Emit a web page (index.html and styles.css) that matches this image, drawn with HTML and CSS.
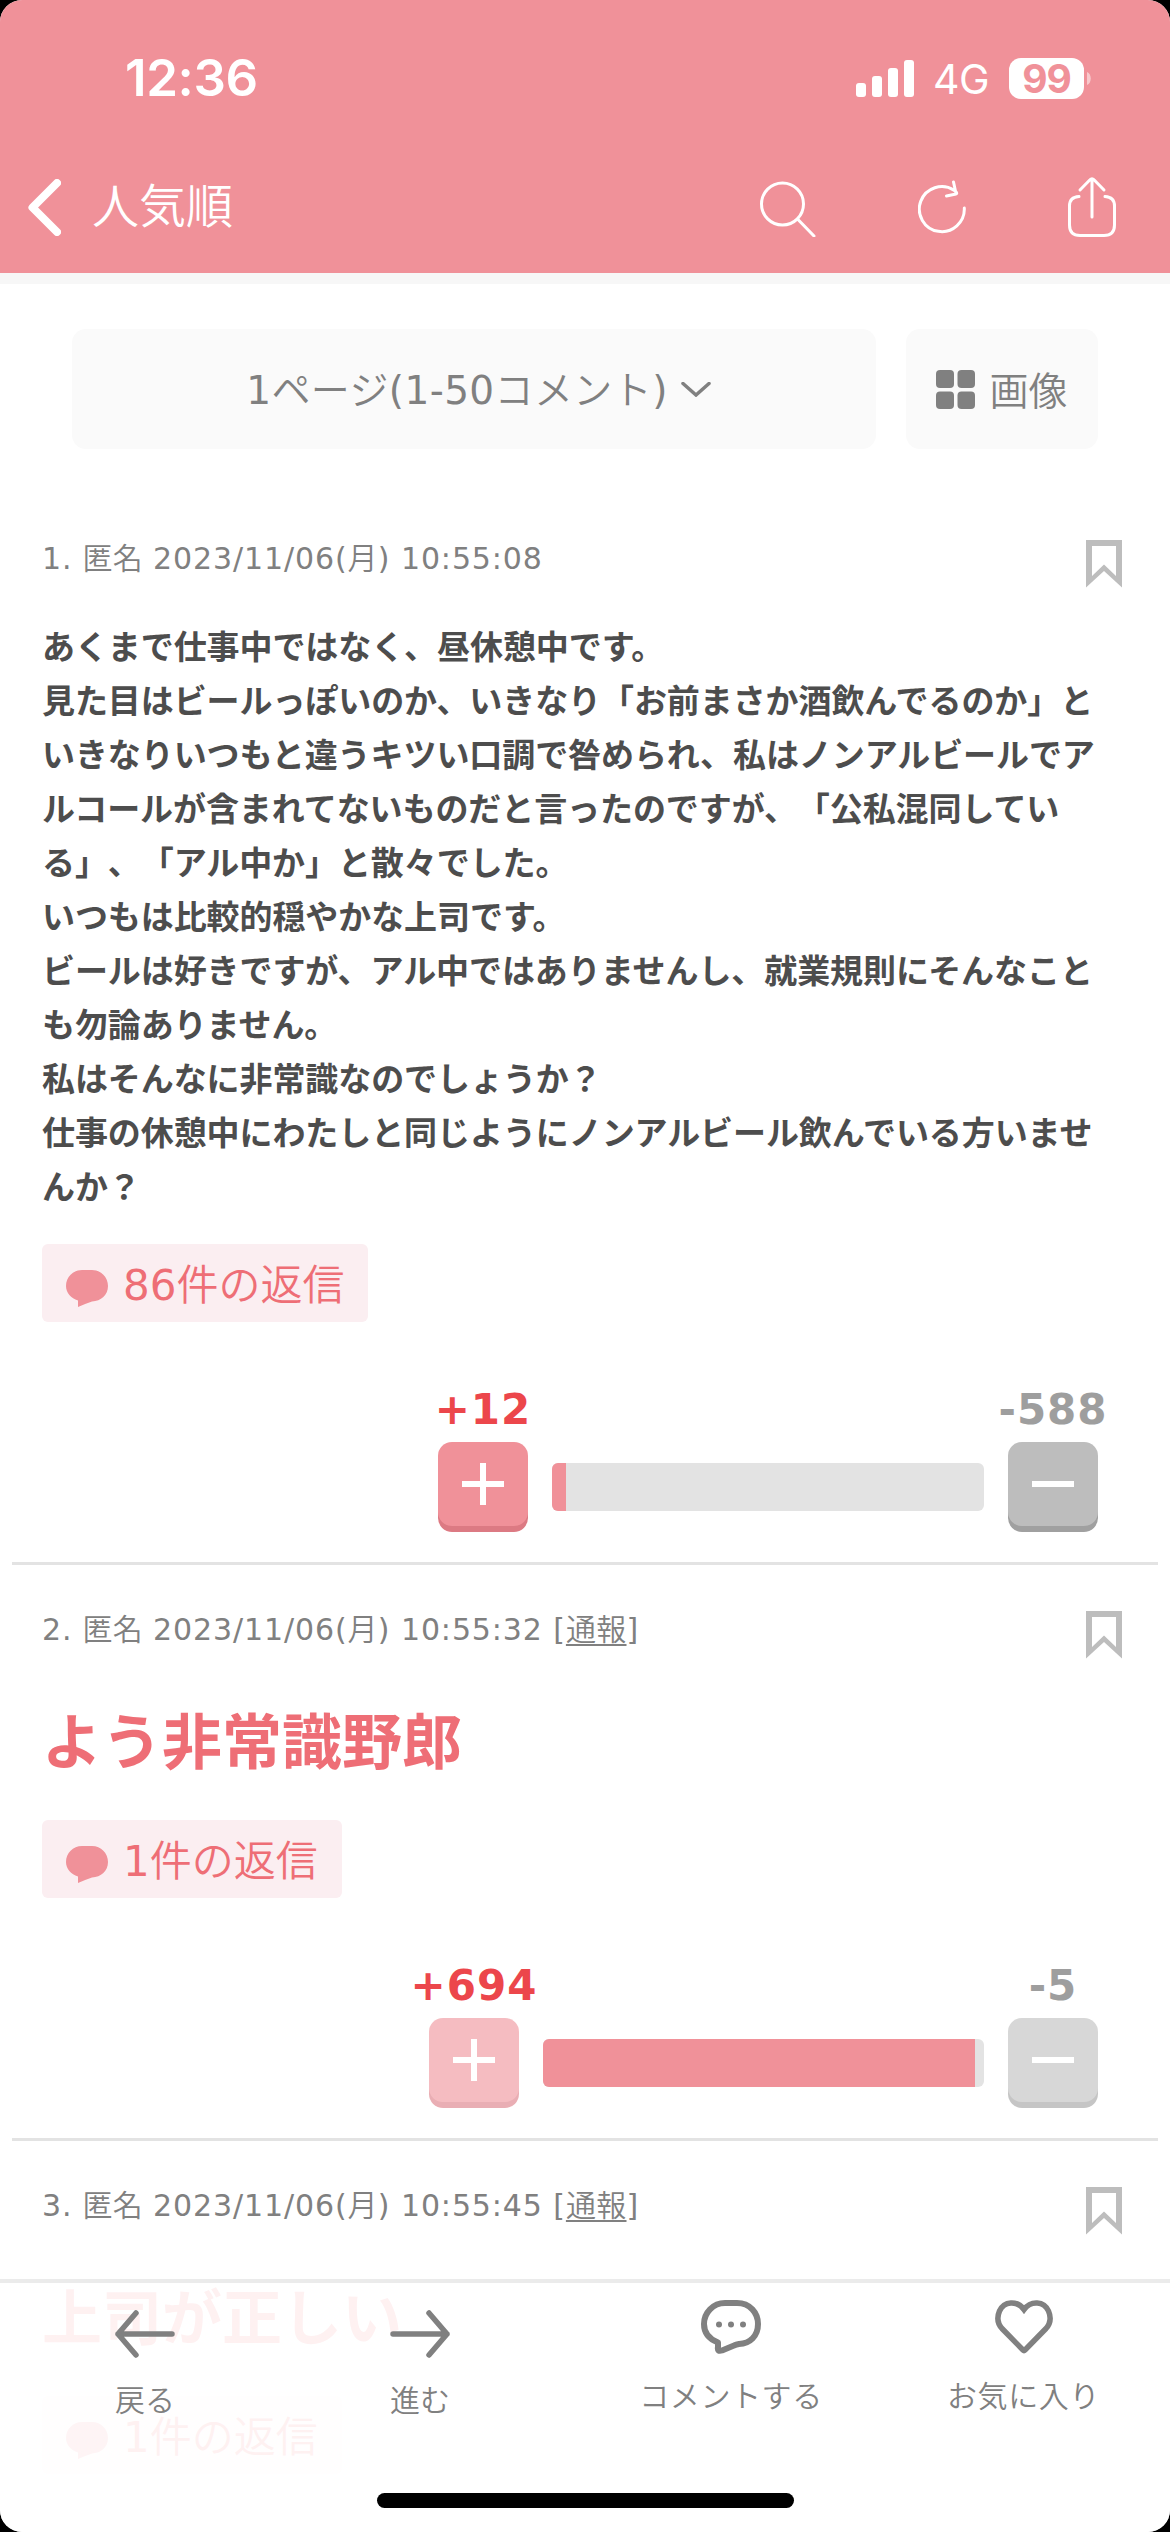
FILE: index.html
```html
<!DOCTYPE html>
<html lang="ja">
<head>
<meta charset="utf-8">
<title>人気順</title>
<link rel="stylesheet" href="styles.css">
</head>
<body>
<svg class="defs" width="0" height="0" aria-hidden="true">
  <symbol id="bookmark" viewBox="0 0 36 48"><path d="M0 0H36V47.500L18 31L0 47.500ZM6 6V36L18 24.500L30 36V6Z" fill="#bdbdbd" fill-rule="evenodd"/></symbol>
  <symbol id="bubble" viewBox="0 0 42 37"><path d="M16 0H26C35 0 42 7 42 16C42 25 35 31 26 31.500Q20 33.500 12 37V30.500C5 28 0 23 0 16C0 7 7 0 16 0Z" fill="#f09199"/></symbol>
</svg>
<div class="screen">
  <header class="header">
    <div class="status">
      <span class="clock">12:36</span>
      <div class="indicators">
        <svg width="58" height="37" viewBox="0 0 58 37" fill="#fff"><rect y="23" width="10" height="14" rx="3"/><rect x="16" y="16" width="10" height="21" rx="3"/><rect x="32" y="8" width="10" height="29" rx="3"/><rect x="48" width="10" height="37" rx="3"/></svg>
        <span class="network">4G</span>
        <span class="battery">99</span>
        <svg class="battery-tip" width="4" height="13" viewBox="0 0 4 13"><path d="M0 0C5 2 5 11 0 13Z" fill="#fff" fill-opacity=".5"/></svg>
      </div>
    </div>
    <nav class="nav">
      <svg class="back" width="33" height="57" viewBox="0 0 33 57" fill="none" stroke="#fff" stroke-width="8" stroke-linecap="round" stroke-linejoin="round"><path d="M29 4L4.500 28.500L29 53"/></svg>
      <span class="nav-title">人気順</span>
      <div class="tools">
        <svg width="56" height="60" viewBox="0 0 56 60" fill="none" stroke="#fff" stroke-width="3" stroke-linecap="round"><circle cx="22.500" cy="27" r="21"/><path d="M38 42.500L54 59"/></svg>
        <svg class="reload" width="48" height="60" viewBox="0 0 48 60" fill="none" stroke="#fff" stroke-width="3" stroke-linecap="round" stroke-linejoin="round"><path d="M46.300 31A22.500 22.500 0 1 1 36 13.200Q40 16 38 17L28.500 19M38 16.500L35.500 5"/></svg>
        <svg width="48" height="60" viewBox="0 0 48 60" fill="none" stroke="#fff" stroke-width="3" stroke-linecap="round" stroke-linejoin="round"><path d="M11 19.500Q1.500 20 1.500 29V48Q1.500 58.500 12 58.500H36Q46.500 58.500 46.500 48V29Q46.500 20 37 19.500M24 40V2M12 13L22 2.800Q24 .5 26 2.800L36 13"/></svg>
      </div>
    </nav>
  </header>
  <main>
    <div class="pager">
      <button class="control page-select"><span><b>1</b>ページ<b>(1-50</b>コメント<b>)</b></span><svg width="30" height="15" viewBox="0 0 30 15" fill="none" stroke="#808080" stroke-width="3.500" stroke-linecap="round"><path d="M2 1.500L15 13L28 1.500"/></svg></button>
      <button class="control images"><svg width="39" height="39" viewBox="0 0 39 39" fill="#808080"><rect width="18" height="18" rx="4"/><rect x="21.500" width="17.500" height="18" rx="4"/><rect y="21.500" width="18" height="17.500" rx="4"/><rect x="21.500" y="21.500" width="17.500" height="17.500" rx="4"/></svg><span>画像</span></button>
    </div>

    <article class="comment">
      <div class="meta"><span><b>1.</b> 匿名 <b>2023/11/06(</b>月<b>) 10:55:08</b></span><svg width="36" height="48"><use href="#bookmark"/></svg></div>
      <p class="body">あくまで仕事中ではなく、昼休憩中です。<br>見た目はビールっぽいのか、いきなり「お前まさか酒飲んでるのか」と<br>いきなりいつもと違うキツい口調で咎められ、私はノンアルビールでア<br>ルコールが含まれてないものだと言ったのですが、「公私混同してい<br>る」、「アル中か」と散々でした。<br>いつもは比較的穏やかな上司です。<br>ビールは好きですが、アル中ではありませんし、就業規則にそんなこと<br>も勿論ありません。<br>私はそんなに非常識なのでしょうか？<br>仕事の休憩中にわたしと同じようにノンアルビール飲んでいる方いませ<br>んか？</p>
      <a class="replies"><svg width="42" height="37"><use href="#bubble"/></svg><span><b>86</b>件の返信</span></a>
      <div class="votes">
        <div class="vote plus"><span class="count">+12</span><button class="key"></button></div>
        <div class="bar"><div class="fill" style="width:14px"></div></div>
        <div class="vote minus"><span class="count">-588</span><button class="key"></button></div>
      </div>
    </article>

    <article class="comment">
      <div class="meta"><span><b>2.</b> 匿名 <b>2023/11/06(</b>月<b>) 10:55:32 [</b><u>通報</u><b>]</b></span><svg width="36" height="48"><use href="#bookmark"/></svg></div>
      <p class="body loud">よう非常識野郎</p>
      <a class="replies"><svg width="42" height="37"><use href="#bubble"/></svg><span><b>1</b>件の返信</span></a>
      <div class="votes voted">
        <div class="vote plus"><span class="count">+694</span><button class="key"></button></div>
        <div class="bar wide"><div class="fill" style="width:432px"></div></div>
        <div class="vote minus"><span class="count">-5</span><button class="key"></button></div>
      </div>
    </article>

    <article class="comment">
      <div class="meta"><span><b>3.</b> 匿名 <b>2023/11/06(</b>月<b>) 10:55:45 [</b><u>通報</u><b>]</b></span><svg width="36" height="48"><use href="#bookmark"/></svg></div>
      <p class="body loud">上司が正しい</p>
      <a class="replies"><svg width="42" height="37"><use href="#bubble"/></svg><span><b>1</b>件の返信</span></a>
    </article>
  </main>

  <footer class="toolbar">
    <div class="tab tab-back"><svg width="60" height="48" viewBox="0 0 60 48" fill="none" stroke="#808080" stroke-width="5.500" stroke-linecap="round" stroke-linejoin="round"><path d="M57 24H3M21 3L3 24L21 45"/></svg><span>戻る</span></div>
    <div class="tab tab-forward"><svg width="60" height="48" viewBox="0 0 60 48" fill="none" stroke="#808080" stroke-width="5.500" stroke-linecap="round" stroke-linejoin="round"><path d="M3 24H57M39 3L57 24L39 45"/></svg><span>進む</span></div>
    <div class="tab tab-comment"><svg width="60" height="54" viewBox="0 0 60 54"><path d="M24 3H36C49 3 57 13 57 24C57 36 49 43.500 38 44Q35 44.500 33 45.500L21 50.500Q16 52 17 47V42.500C8 39 3 33 3 24C3 13 12 3 24 3Z" fill="none" stroke="#808080" stroke-width="6" stroke-linejoin="round"/><g fill="#808080"><circle cx="18" cy="24.500" r="3"/><circle cx="30" cy="24.500" r="3"/><circle cx="42" cy="24.500" r="3"/></g></svg><span>コメントする</span></div>
    <div class="tab tab-favorite"><svg width="58" height="54" viewBox="0 0 58 54"><path d="M29 9.500C22 0 9 1 4.500 11C1.500 18 3 24 7 28.500L28 50Q29 51 30 50L51 28.500C55 24 56.500 18 53.500 11C49 1 36 0 29 9.500Z" fill="none" stroke="#808080" stroke-width="5.500"/></svg><span>お気に入り</span></div>
  </footer>
  <div class="home-indicator"></div>
</div>
</body>
</html>
```
FILE: styles.css
```css
* { box-sizing: border-box; }
body { margin: 0; background: #000; }
.defs { position: absolute; }
svg { display: block; flex: none; }
button { border: 0; padding: 0; font: inherit; color: inherit; }

.screen {
  position: relative;
  width: 1170px;
  height: 2532px;
  overflow: hidden;
  border-radius: 22px;
  background: #fff;
  color: #808080;
  font-family: "Noto Sans CJK JP", sans-serif;
  font-weight: 350;
  text-spacing-trim: space-all;
}
/* Latin runs use the book weight next to the light Japanese face */
b { font-family: "DejaVu Sans", sans-serif; font-weight: 400; }

/* Header */
.header {
  height: 284px;
  background: #f09199;
  border-bottom: 11px solid #f7f7f7;
  color: #fff;
}
.status {
  display: flex;
  justify-content: space-between;
  align-items: center;
  height: 156px;
  padding: 0 79px 0 125px;
  font-family: Inter, sans-serif;
}
.clock { margin-top: -1px; font-size: 51px; font-weight: 600; letter-spacing: -.4px; }
.indicators { display: flex; align-items: center; }
.network { width: 57px; margin: 1px 0 0 19px; font-size: 41px; font-weight: 400; letter-spacing: -.5px; }
.battery {
  width: 75px;
  height: 41px;
  margin-left: 19px;
  border-radius: 12px;
  background: #fff;
  color: #f09199;
  font-size: 39px;
  font-weight: 700;
  line-height: 41px;
  text-align: center;
  letter-spacing: -1px;
}
.battery-tip { margin-left: 3px; }
.nav {
  display: flex;
  align-items: center;
  height: 100px;
  padding: 0 54px 0 28px;
}
.back { margin-top: 2px; }
.nav-title { margin: -6px 0 0 31px; font-size: 47px; line-height: 60px; }
.tools { display: flex; margin: 1px 0 0 auto; }
.tools .reload { margin: 0 102px; }

/* Page selector */
.pager {
  display: flex;
  gap: 30px;
  height: 210px;
  padding: 45px 72px;
}
.control {
  display: flex;
  align-items: center;
  justify-content: center;
  height: 120px;
  border-radius: 14px;
  background: #fafafa;
  font-size: 39px;
  line-height: 60px;
}
.control span { margin-top: -3px; }
.page-select { width: 804px; gap: 13px; padding-left: 9px; letter-spacing: .4px; }
.page-select span { margin-top: -1px; }
.images { width: 192px; gap: 14px; }

/* Comments */
.comment {
  position: relative;
  padding: 46px 48px 0 42px;
}
.comment + .comment::before {
  content: "";
  position: absolute;
  top: -3px;
  left: 12px;
  right: 12px;
  height: 3px;
  background: #e3e3e3;
}
.meta {
  display: flex;
  justify-content: space-between;
  height: 48px;
  font-size: 30px;
  line-height: 32px;
  letter-spacing: .3px;
  word-spacing: 3px;
}
.meta b { letter-spacing: .9px; word-spacing: 0; }
.meta u { text-underline-offset: 4px; text-decoration-thickness: 2px; }
.body {
  margin: 30px 0 32px;
  color: #4d4d4d;
  font-size: 33px;
  font-weight: 700;
  line-height: 54px;
  letter-spacing: -.08px;
  white-space: nowrap;
}
.loud {
  margin: 34px 0 37px;
  color: #ee6e76;
  font-size: 60px;
  line-height: 90px;
  letter-spacing: 0;
}
.replies {
  display: inline-flex;
  align-items: center;
  height: 78px;
  padding: 0 24px;
  border-radius: 6px;
  background: #fbeef1;
  color: #ee6e76;
  font-size: 42px;
  line-height: 60px;
  vertical-align: top;
}
.replies svg { margin: 10px 15px 0 0; }
.replies span { margin-top: 1px; }
.votes {
  display: flex;
  justify-content: flex-end;
  gap: 24px;
  height: 243px;
  padding: 120px 24px 0 0;
}
.vote {
  position: relative;
  width: 90px;
  color: #9e9e9e;
}
.plus { color: #ec464b; }
.count {
  position: absolute;
  bottom: 130px;
  left: 50%;
  transform: translateX(-50%);
  font-family: "DejaVu Sans", sans-serif;
  font-size: 42px;
  font-weight: 700;
  line-height: 50px;
  letter-spacing: 1px;
}
.key {
  display: block;
  width: 90px;
  height: 90px;
  border-radius: 14px;
  background:
    linear-gradient(#fff, #fff) 24px 39px / 42px 6px no-repeat,
    #bdbdbd;
  box-shadow: inset 0 -6px #a0a0a0;
}
.plus .key {
  background:
    linear-gradient(#fff, #fff) 24px 39px / 42px 6px no-repeat,
    linear-gradient(#fff, #fff) 42px 21px / 6px 42px no-repeat,
    #f09199;
  box-shadow: inset 0 -6px #dc7a83;
}
.voted .key { opacity: .6; }
.bar {
  width: 432px;
  height: 48px;
  margin-top: 21px;
  border-radius: 6px;
  overflow: hidden;
  background: #e3e3e3;
}
.bar.wide { width: 441px; }
.fill { height: 100%; background: #f09199; }

/* Bottom toolbar */
.toolbar {
  position: absolute;
  top: 2279px;
  left: 0;
  right: 0;
  bottom: 0;
  display: grid;
  grid-template-columns: 290px 260px 362px 223px;
  border-top: 4px solid #ebebeb;
  background: rgba(255, 255, 255, .9);
  font-size: 30px;
  line-height: 40px;
}
.tab { display: flex; flex-direction: column; align-items: center; padding-top: 17px; }
.tab span { margin-top: 20px; }
.tab-back, .tab-forward { padding-top: 27px; }
.tab-comment, .tab-favorite { letter-spacing: .6px; }
.home-indicator {
  position: absolute;
  left: 377px;
  bottom: 24px;
  width: 417px;
  height: 15px;
  border-radius: 8px;
  background: #000;
}
```
